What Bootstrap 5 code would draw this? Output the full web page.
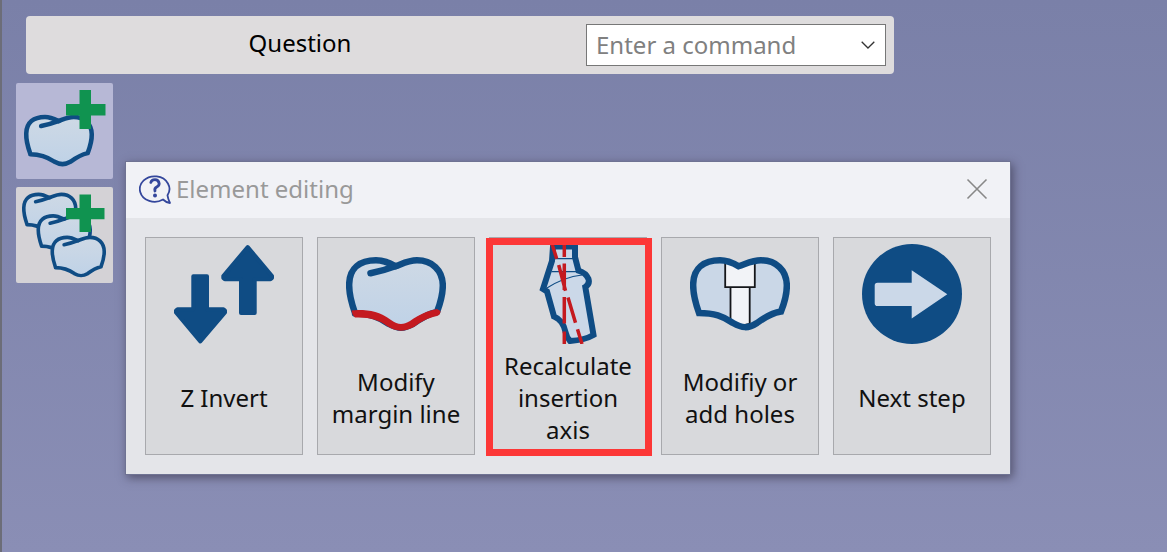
<!DOCTYPE html>
<html lang="en">
<head>
<meta charset="utf-8">
<meta name="viewport" content="width=device-width, initial-scale=1">
<title>Element editing</title>
<link href="https://cdn.jsdelivr.net/npm/bootstrap@5.3.0/dist/css/bootstrap.min.css" rel="stylesheet">
<style>
  body {
    min-height: 100vh;
    background: linear-gradient(#7a80a8, #8a8eb5);
    border-left: 2px solid #6c6d78;
    font-family: "Noto Sans", "Open Sans", sans-serif;
    font-size: 24px;
    line-height: 32px;
    color: #000;
  }
  .command-bar {
    max-width: 868px;
    margin-left: 24px;
    background: #dedcdd;
    border-radius: 4px;
  }
  .command-bar label { padding-right: 20px; padding-bottom: 4px; }
  .command-select {
    width: 300px;
    height: 42px;
    padding: 0 40px 0 9px;
    border: 1px solid #777;
    border-radius: 0;
    color: #808080;
    font-size: 24px;
    line-height: 32px;
    background: #fff url("data:image/svg+xml,%3Csvg xmlns='http://www.w3.org/2000/svg' viewBox='0 0 14 8'%3E%3Cpath d='M.7.7 7 7 13.3.7' fill='none' stroke='%23333' stroke-width='1.3'/%3E%3C/svg%3E") no-repeat right 10px center / 14px 8px;
  }
  .workspace { padding: 9px 14px 0; gap: 13px; }
  .tool-btn {
    width: 97px;
    height: 96px;
    border: 0;
    border-radius: 2px;
    background: #d4d2d6;
  }
  .tool-btn.active { background: #b7b8d6; }
  .tool-btn svg { display: block; width: 100%; height: 100%; }
  .edit-window {
    flex: 0 1 884px;
    margin-top: 79px;
    background: #e4e5e9;
    box-shadow: 0 0 0 1px #6f7393, 2px 3px 9px 1px rgba(50, 45, 65, .6);
  }
  .edit-head { height: 56px; padding: 0 22px 2px 13px; gap: 5px; background: #f1f2f6; }
  .edit-title { font-size: 24px; line-height: 32px; font-weight: 400; color: #999; }
  .close-btn { border: 0; padding: 0; background: none; }
  .close-btn svg, .edit-head svg { display: block; }
  .actions { padding: 19px; gap: 14px; }
  .action-btn {
    flex: 1 1 0;
    min-height: 218px;
    padding: 6px 8px 2px;
    border: 1px solid #a8a9ad;
    background: #d8d9dc;
    color: #111;
  }
  .action-btn svg { width: 100px; height: 100px; }
  .highlighted::after {
    content: "";
    position: absolute;
    inset: 0 -6px -2px -4px;
    border: 7px solid #fc3737;
  }
</style>
</head>
<body>
<svg width="0" height="0" class="position-absolute" aria-hidden="true">
  <defs>
    <linearGradient id="enamel" x1="0" y1="0" x2="0" y2="1">
      <stop offset="0" stop-color="#ced9e5"/><stop offset="1" stop-color="#bfd2e7"/>
    </linearGradient>
    <g id="tooth">
      <path d="M9 69C4 55 3 46 3.200 40C3.500 24 14 16.300 30 16.300C38 16.300 43 19 49.500 22.300C58 19 63 16.300 71 16.300C86 16.300 96.500 26 96.800 41C97 51 94 60 91 68C82 70 75 74 67 80C58 85 52 85 43 80C33 73 24 69.500 9 69.500Z" fill="url(#enamel)" stroke="#0f4c84" stroke-width="6.500" stroke-linejoin="round"/>
      <path d="M24.500 29.300C36 27 42 25 50 22" fill="none" stroke="#0f4c84" stroke-width="6.500" stroke-linecap="round"/>
    </g>
  </defs>
</svg>

<main class="pt-3">
  <form class="command-bar d-flex align-items-center p-2">
    <label for="command" class="flex-fill text-center">Question</label>
    <select id="command" class="form-select command-select flex-shrink-0">
      <option>Enter a command</option>
    </select>
  </form>

  <div class="workspace d-flex align-items-start">
    <div class="d-flex flex-column gap-2 flex-shrink-0">
      <button type="button" class="tool-btn active p-0" aria-label="Add element">
        <svg viewBox="0 0 97 96">
          <use href="#tooth" transform="translate(8 22.500) scale(.7)"/>
          <path d="M63.500 7h11.500v14h14.500v11.500H75V46H63.500V32.500H50V21h13.500z" fill="#109350"/>
        </svg>
      </button>
      <button type="button" class="tool-btn p-0" aria-label="Add several elements">
        <svg viewBox="0 0 97 96">
          <g stroke-width="7">
            <use href="#tooth" transform="translate(6 -2) scale(.555 .57)"/>
            <use href="#tooth" transform="translate(20.500 19.500) scale(.555 .57)"/>
          </g>
          <path d="M63.500 7.500H75V21h13.500v11.300H75V45H63.500V32.300H50V21h13.500z" fill="#109350"/>
          <use href="#tooth" transform="translate(34.500 41) scale(.555 .57)"/>
        </svg>
      </button>
    </div>

    <section class="edit-window" aria-labelledby="edit-title">
      <header class="edit-head d-flex align-items-center">
        <svg width="32" height="32" viewBox="0 0 32 32" fill="none" stroke="#34479c" stroke-width="1.800" stroke-linejoin="round" aria-hidden="true">
          <path d="M28.500 22.300A14.800 12.700 0 1 0 24 26.500Q27 29.500 31 30Q29 26 28.500 22.300Z"/>
          <path d="M11.800 9.500Q12.500 6.700 16 6.700T20.200 10.500Q20.200 12.700 17.700 14T16 18" stroke-width="2.800" stroke-linecap="round"/>
          <circle cx="16" cy="22.500" r="2" fill="#34479c" stroke="none"/>
        </svg>
        <h1 id="edit-title" class="edit-title mb-0 me-auto">Element editing</h1>
        <button type="button" class="close-btn" aria-label="Close">
          <svg width="22" height="22" viewBox="0 0 22 22" fill="none" stroke="#888" stroke-width="1.600"><path d="M1.500 1.500 20.500 20.500M20.500 1.500 1.500 20.500"/></svg>
        </button>
      </header>

      <div class="actions d-flex">
        <button type="button" class="action-btn d-flex flex-column align-items-center">
          <svg viewBox="0 0 100 100" class="flex-shrink-0" fill="#0f4c84" stroke="#0f4c84" stroke-width="4" stroke-linejoin="round" aria-hidden="true">
            <path d="M19.300 32.200H33V65.300H49.500L51 66.500V68.500L26.300 97.500 2 68.500V66.500L3.500 65.300H19.300z"/>
            <path d="M73.700 3 98 32V34L96.500 35.300H80.700V69H67V35.300H50.800L49.300 34V32z"/>
          </svg>
          <span class="flex-fill d-flex align-items-center">Z Invert</span>
        </button>
        <button type="button" class="action-btn d-flex flex-column align-items-center">
          <svg viewBox="0 0 100 100" class="flex-shrink-0" aria-hidden="true">
            <use href="#tooth"/>
            <path d="M5.500 66.500 12 66C25 66 34 68 45 76C52 81 57 81 64 77C74 70 81 67 91 65L94.500 67Q94.500 71 91 72C82 74 76 77 68 83C58 88 50 88 41 82C33 76 24 73 9 73.500Q6 71 5.500 66.500Z" fill="#c41a20"/>
          </svg>
          <span class="flex-fill d-flex align-items-center">Modify<br>margin line</span>
        </button>
        <button type="button" class="action-btn highlighted position-relative d-flex flex-column align-items-center">
          <svg viewBox="0 0 100 100" class="flex-shrink-0" fill="none" aria-hidden="true">
            <path d="M35 2.500H57V13L60.500 26.700Q68 29 70.500 35Q72 40 67.300 43L75.500 91Q67 96 52 97Q48.500 93 47.500 88Q45 76 36 72.500L29 47.500 25 45 34 17z" fill="#cbd8e8" stroke="#0f4c84" stroke-width="6"/>
            <path d="M34 14.700H58M33.500 27.700H61M28.500 44.300Q46 33 64 31" stroke="#0f4c84" stroke-width="1.200"/>
            <path d="M46.300 0V13M46.300 19.500V46M46.300 53V79.500M46.300 87.500V100M34 0 38.700 14.700M40.700 21 47.500 46.700M50 53.500 57.500 78.700M59.500 85.300 64 100" stroke="#c41a20" stroke-width="3.500"/>
          </svg>
          <span class="flex-fill d-flex align-items-center">Recalculate<br>insertion<br>axis</span>
        </button>
        <button type="button" class="action-btn d-flex flex-column align-items-center">
          <svg viewBox="0 0 100 100" class="flex-shrink-0" aria-hidden="true">
            <path d="M9 69C4 55 3 46 3.200 40C3.500 24 14 16.300 30 16.300C38 16.300 43 19 48.500 22.300C58 19 63 16.300 71 16.300C86 16.300 96.500 26 96.800 41C97 51 94 60 91 67.500C82 69 75 73 67 79C58 85 52 84 43 79C33 72 24 69 9 69Z" fill="#cad7e7"/>
            <path d="M40.500 43.500V76L50 82 59.700 80V43.500M35.200 16V43.200H64.800V16L49 22z" fill="#f2f3f7" stroke="#15161a" stroke-width="1.800"/>
            <path d="M9 69C4 55 3 46 3.200 40C3.500 24 14 16.300 30 16.300C38 16.300 43 19 48.500 22.300C58 19 63 16.300 71 16.300C86 16.300 96.500 26 96.800 41C97 51 94 60 91 67.500C82 69 75 73 67 79C58 85 52 84 43 79C33 72 24 69 9 69Z" fill="none" stroke="#0f4c84" stroke-width="6.500"/>
          </svg>
          <span class="flex-fill d-flex align-items-center">Modifiy or<br>add holes</span>
        </button>
        <button type="button" class="action-btn d-flex flex-column align-items-center">
          <svg viewBox="0 0 100 100" class="flex-shrink-0" aria-hidden="true">
            <circle cx="50" cy="50" r="50" fill="#0f4c84"/>
            <path d="M15.500 38.700H49.700V26.300L85.300 50.300 49.700 74.500V62H15.500Q12.700 62 12.700 59.200V41.500Q12.700 38.700 15.500 38.700z" fill="#cbd8e8"/>
          </svg>
          <span class="flex-fill d-flex align-items-center">Next step</span>
        </button>
      </div>
    </section>
  </div>
</main>
<script src="https://cdn.jsdelivr.net/npm/bootstrap@5.3.0/dist/js/bootstrap.bundle.min.js"></script>
</body>
</html>
